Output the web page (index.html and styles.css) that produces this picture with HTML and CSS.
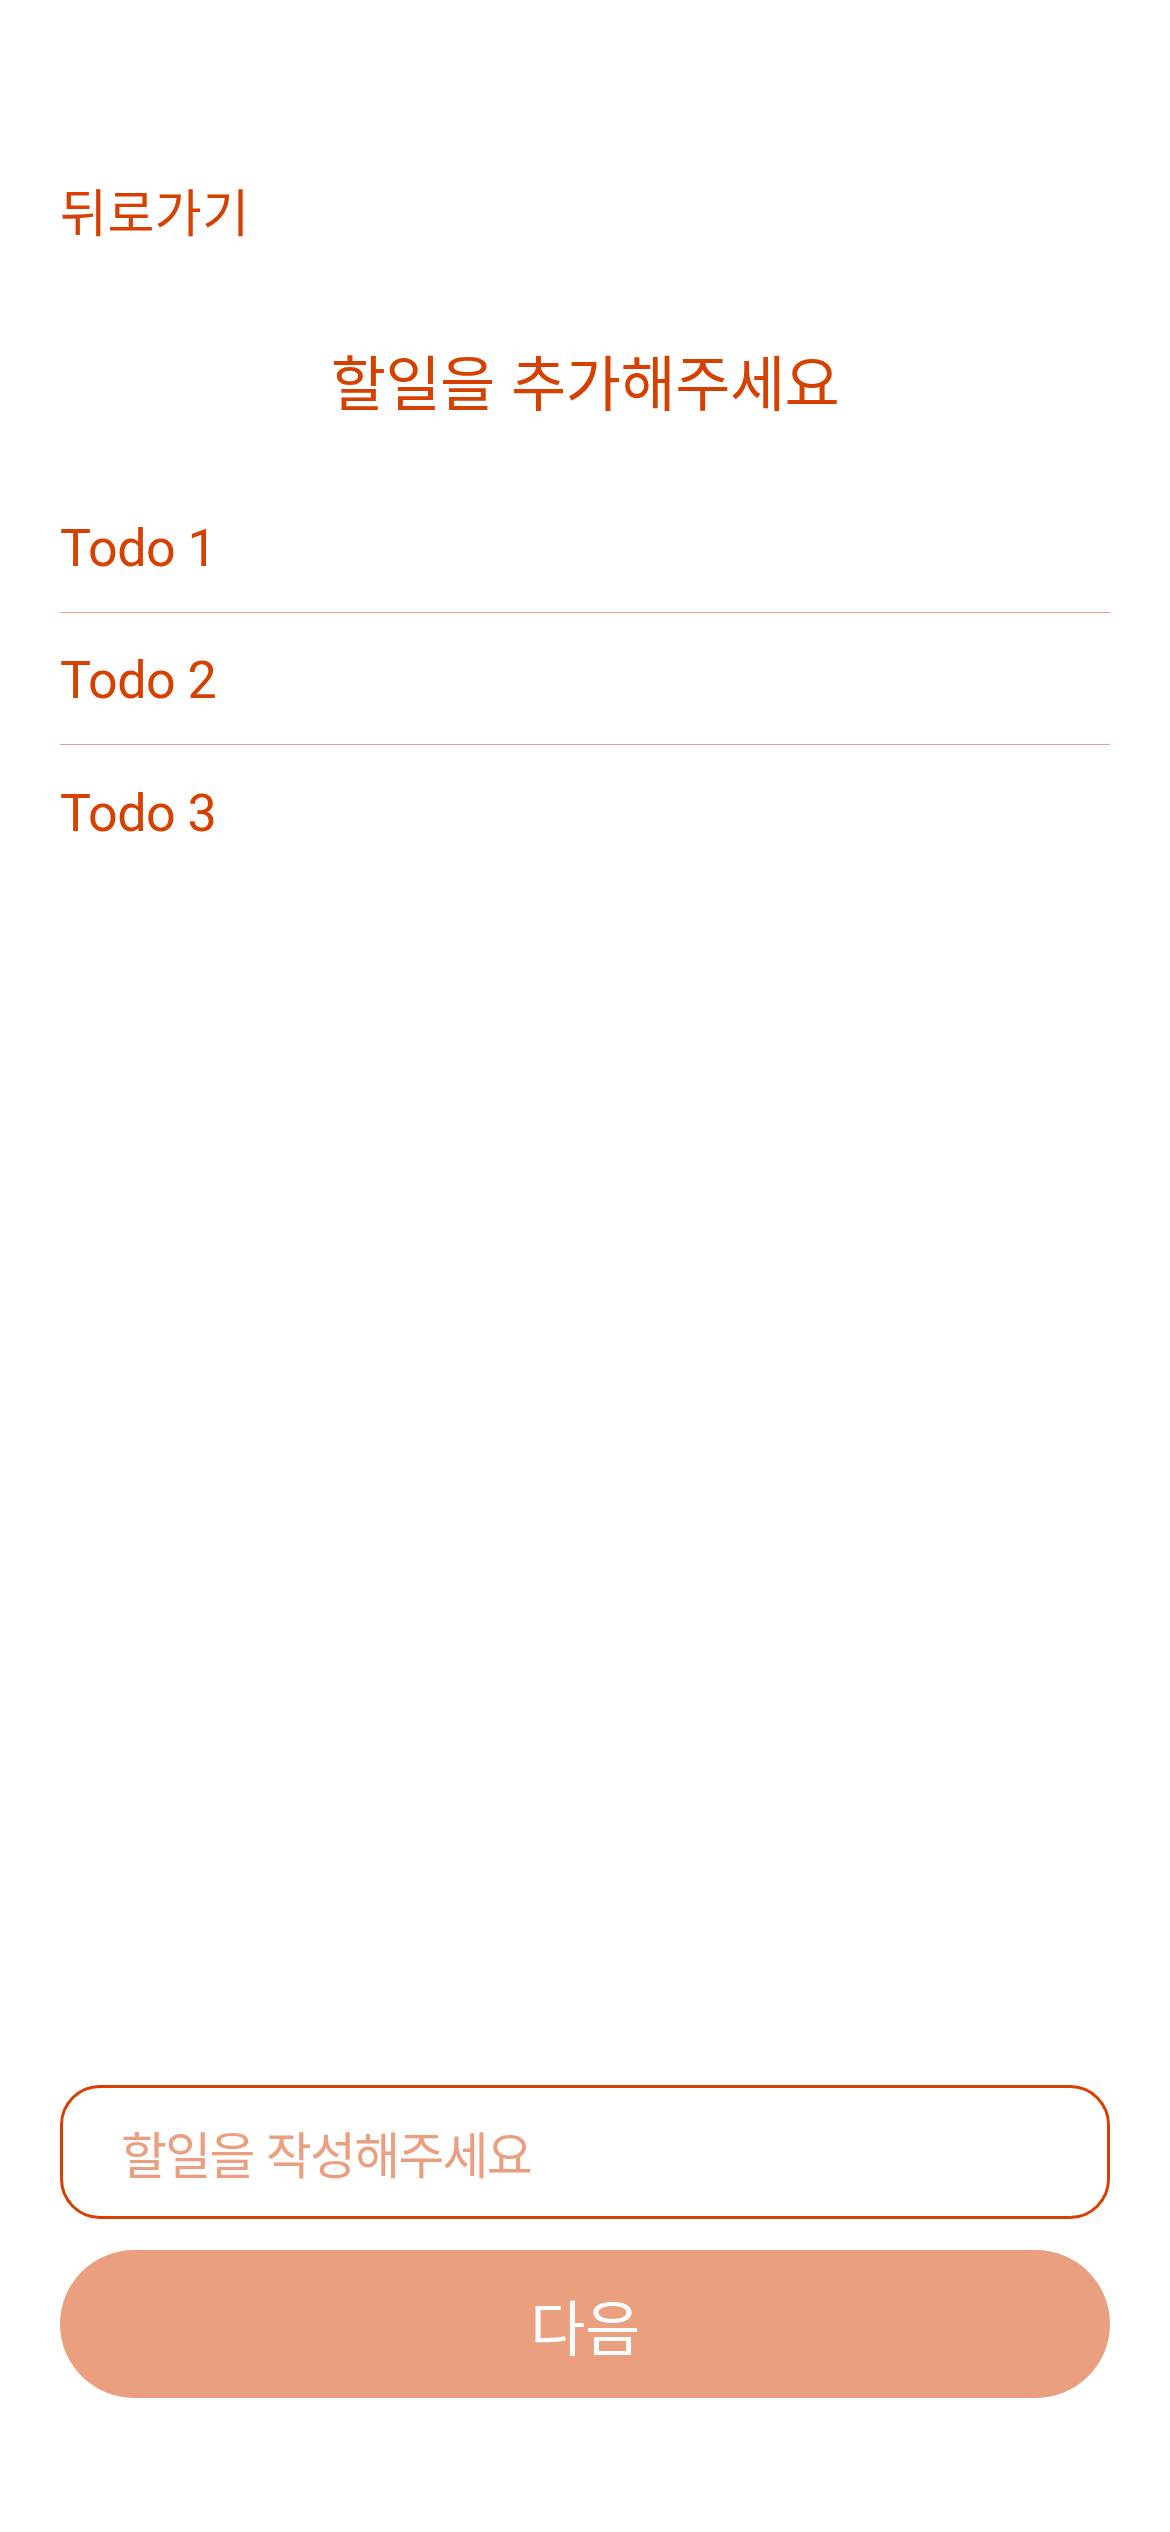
FILE: index.html
```html
<!DOCTYPE html>
<html lang="ko">
<head>
<meta charset="utf-8">
<title>할일 추가</title>
<link rel="stylesheet" href="styles.css">
</head>
<body>
<div class="page">
  <header class="top">
    <span class="back">뒤로가기</span>
  </header>
  <h1 class="title">할일을 추가해주세요</h1>
  <ul class="todos">
    <li class="todo">Todo 1</li>
    <li class="todo">Todo 2</li>
    <li class="todo">Todo 3</li>
  </ul>
  <div class="bottom">
    <div class="field">
      <input class="field-input" type="text" placeholder="할일을 작성해주세요">
    </div>
    <button class="next" type="button">다음</button>
  </div>
</div>
</body>
</html>
```

FILE: styles.css
```css
* { box-sizing: border-box; }
html, body { margin: 0; padding: 0; background: #ffffff; }
body {
  font-family: "Noto Sans CJK KR", "Noto Sans", sans-serif;
  color: #d64000;
}
.page {
  min-height: 2532px;
  display: flex;
  flex-direction: column;
  padding: 0 60px;
}
.top {
  margin-top: 170px;
  height: 80px;
  display: flex;
  align-items: center;
}
.back {
  font-size: 51px;
  line-height: 80px;
  letter-spacing: 0.5px;
}
.title {
  margin: 90px 0 0 0;
  height: 80px;
  line-height: 80px;
  font-size: 60px;
  font-weight: 400;
  text-align: center;
  letter-spacing: -0.5px;
}
.todos {
  list-style: none;
  margin: 61px 0 0 0;
  padding: 0;
}
.todo {
  height: 132px;
  display: flex;
  align-items: center;
  padding-top: 4px;
  font-family: Roboto, "Noto Sans", sans-serif;
  font-size: 52px;
  letter-spacing: -0.5px;
  border-bottom: 1px solid #ea9f80;
}
.todo:last-child { border-bottom: none; }
.bottom {
  margin-top: auto;
  padding-bottom: 134px;
  display: flex;
  flex-direction: column;
  gap: 31px;
}
.field {
  height: 134px;
  border: 3px solid #d64000;
  border-radius: 40px;
  display: flex;
  align-items: center;
  padding: 0 0 0 58px;
}
.field-input {
  border: none;
  outline: none;
  background: transparent;
  width: 100%;
  font-family: "Noto Sans CJK KR", "Noto Sans", sans-serif;
  font-size: 50px;
  letter-spacing: -1.8px;
  color: #d64000;
  padding: 0;
}
.field-input::placeholder { color: #eaa080; opacity: 1; }
.next {
  height: 148px;
  border: none;
  border-radius: 74px;
  background: #ea9f7f;
  color: #ffffff;
  font-family: "Noto Sans CJK KR", "Noto Sans", sans-serif;
  font-size: 60px;
  letter-spacing: -0.5px;
  padding: 0;
  cursor: pointer;
}
```
